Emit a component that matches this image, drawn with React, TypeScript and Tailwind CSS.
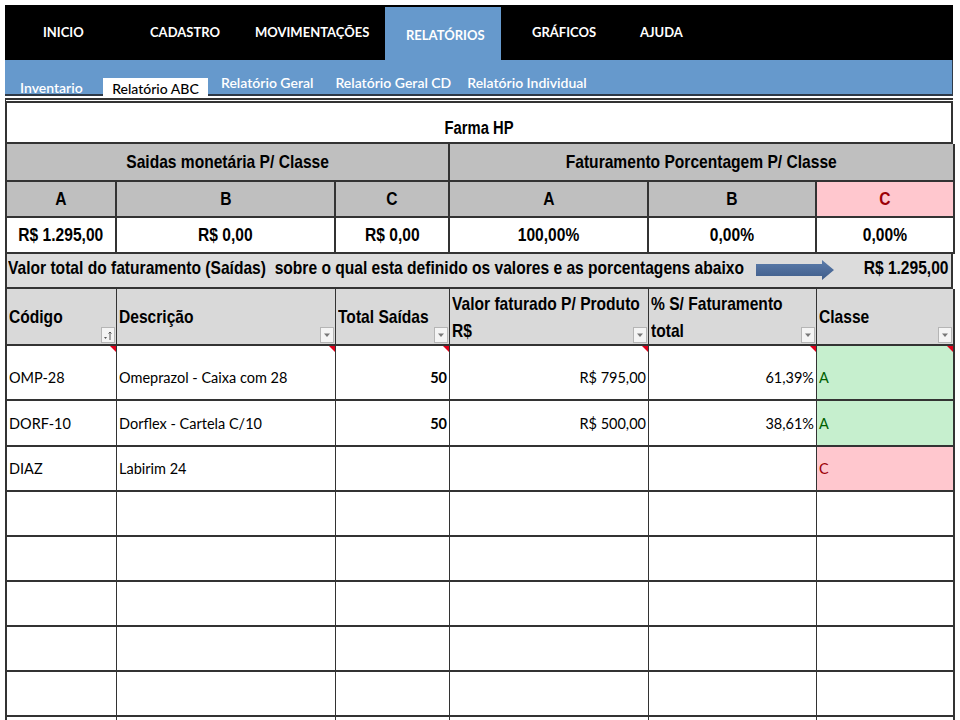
import React from "react";

const arial = { fontFamily: '"Liberation Sans", Arial, sans-serif' };
const calibri = { fontFamily: 'Lato, "Open Sans", sans-serif' };

const cols = "grid grid-cols-[110px_219px_114px_199px_168px_138px]";

// Arial Narrow look-alike: Liberation Sans squeezed horizontally
const Narrow = ({ children, origin = "origin-center" }: { children: React.ReactNode; origin?: string }) => (
  <span className={`inline-block scale-x-[0.82] whitespace-nowrap ${origin}`}>{children}</span>
);

const topNav = [
  { label: "INICIO", cls: "w-[125px] pl-[38px]" },
  { label: "CADASTRO", cls: "w-[100px] pl-[20px]" },
  { label: "MOVIMENTAÇÕES", cls: "w-[155px] pl-[25px]" },
];

const FilterBtn = ({ sort = false }: { sort?: boolean }) => (
  <div className="absolute right-[1px] bottom-[1px] flex h-[16px] w-[14px] items-center justify-center border border-[#b5b5b5] bg-[#f4f4f4]">
    {sort ? (
      <svg width="10" height="11" viewBox="0 0 10 11">
        <path d="M1 7 L4 7 L2.5 9 Z" fill="#555" />
        <path d="M7 2 L7 10 M5.5 3.5 L7 2 L8.5 3.5" stroke="#555" strokeWidth="1" fill="none" />
      </svg>
    ) : (
      <svg width="8" height="6" viewBox="0 0 8 6">
        <path d="M1 1.5 L7 1.5 L4 5 Z" fill="#777" />
      </svg>
    )}
  </div>
);

const RedMark = () => (
  <div className="absolute top-0 right-0 h-0 w-0 border-t-[6px] border-l-[6px] border-t-[#e0001b] border-l-transparent" />
);

const rows = [
  { code: "OMP-28", desc: "Omeprazol - Caixa com 28", qty: "50", val: "R$ 795,00", pct: "61,39%", cls: "A", h: "h-[55px]", first: true },
  { code: "DORF-10", desc: "Dorflex - Cartela C/10", qty: "50", val: "R$ 500,00", pct: "38,61%", cls: "A", h: "h-[46px]" },
  { code: "DIAZ", desc: "Labirim 24", qty: "", val: "", pct: "", cls: "C", h: "h-[45px]" },
];

export default function App() {
  return (
    <div className="h-[720px] w-[960px] overflow-hidden bg-white pt-[5px] pl-[5px]">
      <div className="w-[948px]">
        {/* top menu */}
        <div className="flex h-[55px] bg-black text-[13px] font-bold text-white" style={calibri}>
          {topNav.map((n) => (
            <div key={n.label} className={`${n.cls} pt-[18px]`}>
              {n.label}
            </div>
          ))}
          <div className="mt-[2px] w-[116px] bg-[#6699cc] pt-[19px] pl-[21px]">RELATÓRIOS</div>
          <div className="w-[110px] pt-[18px] pl-[31px]">GRÁFICOS</div>
          <div className="pt-[18px] pl-[29px]">AJUDA</div>
        </div>

        {/* sub menu */}
        <div className="flex h-[36px] border-r border-b-2 border-[#2f3a48] bg-[#6699cc] text-[14px] font-semibold text-white" style={calibri}>
          <div className="w-[98px] pt-[17px] pl-[15px]">Inventario</div>
          <div className="mt-[18px] flex h-[18px] w-[105px] items-center justify-center bg-white pt-[2px] font-medium text-black">
            Relatório ABC
          </div>
          <div className="pt-[12px] pl-[13px]">Relatório Geral</div>
          <div className="pt-[12px] pl-[22px]">Relatório Geral CD</div>
          <div className="pt-[12px] pl-[16px]">Relatório Individual</div>
        </div>

        {/* sheet */}
        <div className="mt-[2px] border-t-[5px] border-l-2 border-double border-[#333] text-[19px] font-bold" style={arial}>
          <div className="flex h-[41px] items-center justify-center border-r-2 border-b-2 border-[#333] pt-[12px] text-[18px]">
            <Narrow>Farma HP</Narrow>
          </div>

          <div className="grid grid-cols-[443px_505px] bg-[#bfbfbf]">
            <div className="flex h-[38px] items-center justify-center border-r-2 border-b-2 border-[#333]">
              <Narrow>Saidas monetária P/ Classe</Narrow>
            </div>
            <div className="flex h-[38px] items-center justify-center border-r-2 border-b-2 border-[#333]">
              <Narrow>Faturamento Porcentagem P/ Classe</Narrow>
            </div>
          </div>

          <div className={cols}>
            {["A", "B", "C", "A", "B"].map((l, i) => (
              <div key={i} className="flex h-[36px] items-center justify-center border-r-2 border-b-2 border-[#333] bg-[#bfbfbf]">
                <Narrow>{l}</Narrow>
              </div>
            ))}
            <div className="flex h-[36px] items-center justify-center border-r-2 border-b-2 border-[#333] bg-[#ffc7ce] text-[#9c0006]">
              <Narrow>C</Narrow>
            </div>
          </div>

          <div className={cols}>
            {["R$ 1.295,00", "R$ 0,00", "R$ 0,00", "100,00%", "0,00%", "0,00%"].map((v, i) => (
              <div key={i} className="flex h-[36px] items-center justify-center border-r-2 border-b-2 border-[#333]">
                <Narrow>{v}</Narrow>
              </div>
            ))}
          </div>

          <div className="flex h-[35px] items-center border-r-2 border-b-2 border-[#333] bg-[#dcdcdc] pr-[2px] pb-[4px] pl-[1px]">
            <div className="w-[748px]">
              <Narrow origin="origin-left">
                Valor total do faturamento (Saídas)&nbsp; sobre o qual esta definido os valores e as porcentagens abaixo
              </Narrow>
            </div>
            <svg className="mt-[2px]" width="78" height="20" viewBox="0 0 78 20">
              <defs>
                <linearGradient id="arr" x1="0" y1="0" x2="0" y2="1">
                  <stop offset="0" stopColor="#5b7cab" />
                  <stop offset="1" stopColor="#3f5d8a" />
                </linearGradient>
              </defs>
              <path d="M0 4 L66 4 L66 0 L78 10 L66 20 L66 16 L0 16 Z" fill="url(#arr)" />
            </svg>
            <div className="ml-auto">
              <Narrow origin="origin-right">R$ 1.295,00</Narrow>
            </div>
          </div>

          {/* column headers */}
          <div className={`${cols} bg-[#d9d9d9] leading-[27px]`}>
            <div className="relative flex h-[57px] items-center border-r border-b-2 border-[#333] pl-[2px]">
              <Narrow origin="origin-left">Código</Narrow>
              <FilterBtn sort />
            </div>
            <div className="relative flex h-[57px] items-center border-r border-b-2 border-[#333] pl-[2px]">
              <Narrow origin="origin-left">Descrição</Narrow>
              <FilterBtn />
            </div>
            <div className="relative flex h-[57px] items-center border-r border-b-2 border-[#333] pl-[2px]">
              <Narrow origin="origin-left">Total Saídas</Narrow>
              <FilterBtn />
            </div>
            <div className="relative flex h-[57px] flex-col justify-center border-r border-b-2 border-[#333] pl-[2px]">
              <Narrow origin="origin-left">Valor faturado P/ Produto</Narrow>
              <Narrow origin="origin-left">R$</Narrow>
              <FilterBtn />
            </div>
            <div className="relative flex h-[57px] flex-col justify-center border-r border-b-2 border-[#333] pl-[2px]">
              <Narrow origin="origin-left">% S/ Faturamento</Narrow>
              <Narrow origin="origin-left">total</Narrow>
              <FilterBtn />
            </div>
            <div className="relative flex h-[57px] items-center border-r-2 border-b-2 border-[#333] pl-[2px]">
              <Narrow origin="origin-left">Classe</Narrow>
              <FilterBtn />
            </div>
          </div>

          {/* data */}
          <div className="text-[14.5px] font-normal" style={calibri}>
            {rows.map((r) => (
              <div key={r.code} className={cols}>
                <div className={`relative flex ${r.h} items-end border-r border-b-2 border-[#333] pb-[10px] pl-[2px]`}>
                  {r.code}
                  {r.first && <RedMark />}
                </div>
                <div className={`relative flex ${r.h} items-end border-r border-b-2 border-[#333] pb-[10px] pl-[2px]`}>
                  {r.desc}
                  {r.first && <RedMark />}
                </div>
                <div className={`relative flex ${r.h} items-end justify-end border-r border-b-2 border-[#333] pr-[2px] pb-[10px] font-bold`}>
                  {r.qty}
                  {r.first && <RedMark />}
                </div>
                <div className={`relative flex ${r.h} items-end justify-end border-r border-b-2 border-[#333] pr-[2px] pb-[10px]`}>
                  {r.val}
                  {r.first && <RedMark />}
                </div>
                <div className={`relative flex ${r.h} items-end justify-end border-r border-b-2 border-[#333] pr-[2px] pb-[10px]`}>
                  {r.pct}
                  {r.first && <RedMark />}
                </div>
                <div
                  className={`relative flex ${r.h} items-end border-r-2 border-b-2 border-[#333] pb-[10px] pl-[2px] ${
                    r.cls === "A" ? "bg-[#c6efce] text-[#006100]" : "bg-[#ffc7ce] text-[#9c0006]"
                  }`}
                >
                  {r.cls}
                  {r.first && <RedMark />}
                </div>
              </div>
            ))}
            {[0, 1, 2, 3, 4, 5].map((i) => (
              <div key={i} className={cols}>
                {[0, 1, 2, 3, 4].map((c) => (
                  <div key={c} className="h-[45px] border-r border-b-2 border-[#333]" />
                ))}
                <div className="h-[45px] border-r-2 border-b-2 border-[#333]" />
              </div>
            ))}
          </div>
        </div>
      </div>
    </div>
  );
}
